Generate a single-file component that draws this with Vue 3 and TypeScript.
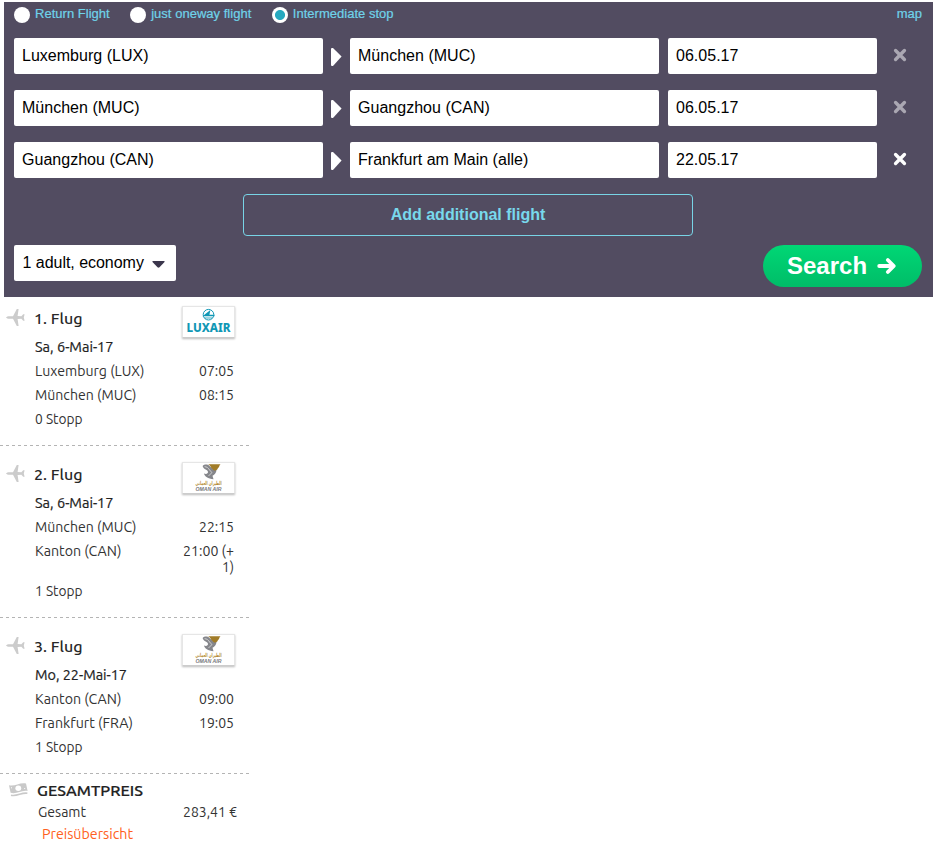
<script setup lang="ts">
import { ref } from 'vue'

interface Leg { from: string; to: string; date: string; removable: boolean }
interface Row { text: string; time: string; width: number; tall?: boolean }
interface Flight { title: string; day: string; dayWidth: number; airline: 'luxair' | 'oman'; rows: Row[]; stops: string }

const modes = ref([
  { label: 'Return Flight', checked: false },
  { label: 'just oneway flight', checked: false },
  { label: 'Intermediate stop', checked: true },
])

const legs = ref<Leg[]>([
  { from: 'Luxemburg (LUX)', to: 'München (MUC)', date: '06.05.17', removable: false },
  { from: 'München (MUC)', to: 'Guangzhou (CAN)', date: '06.05.17', removable: false },
  { from: 'Guangzhou (CAN)', to: 'Frankfurt am Main (alle)', date: '22.05.17', removable: true },
])

const flights: Flight[] = [
  { title: '1. Flug', day: 'Sa, 6-Mai-17', dayWidth: 78.5, airline: 'luxair', stops: '0 Stopp', rows: [
    { text: 'Luxemburg (LUX)', time: '07:05', width: 109.5 },
    { text: 'München (MUC)', time: '08:15', width: 101.5 },
  ] },
  { title: '2. Flug', day: 'Sa, 6-Mai-17', dayWidth: 78.5, airline: 'oman', stops: '1 Stopp', rows: [
    { text: 'München (MUC)', time: '22:15', width: 101.5 },
    { text: 'Kanton (CAN)', time: '21:00 (+', width: 86.5, tall: true },
  ] },
  { title: '3. Flug', day: 'Mo, 22-Mai-17', dayWidth: 92, airline: 'oman', stops: '1 Stopp', rows: [
    { text: 'Kanton (CAN)', time: '09:00', width: 86.5 },
    { text: 'Frankfurt (FRA)', time: '19:05', width: 98 },
  ] },
]
</script>

<template>
  <main class="page">
    <section class="search">
      <div class="modes">
        <label v-for="m in modes" :key="m.label" class="mode">
          <span class="radio" :class="{ on: m.checked }"></span><span class="caption">{{ m.label }}</span>
        </label>
        <a class="map caption">map</a>
      </div>
      <div v-for="(leg, i) in legs" :key="i" class="leg">
        <div class="field">{{ leg.from }}</div>
        <svg class="arrow" viewBox="0 0 11 18"><path d="M0 .5Q0 0 1 0H2L10.6 8.6 2 18H1Q0 18 0 17Z" fill="#fff" /></svg>
        <div class="field">{{ leg.to }}</div>
        <div class="field date">{{ leg.date }}</div>
        <svg class="remove" :class="{ active: leg.removable }" viewBox="0 0 12 12"><path d="M2.2 2.2 9.8 9.8M9.8 2.2 2.2 9.8" /></svg>
      </div>
      <button class="add">Add additional flight</button>
      <div class="bottom">
        <div class="pax"><span>1 adult, economy</span><svg viewBox="0 0 13 7"><path d="M.5 0H12.5V1L7.5 6.3Q6.5 7 5.5 6.3L.5 1Z" fill="#3b364c" /></svg></div>
        <button class="go"><span>Search</span><svg viewBox="0 0 20 18"><path d="M2.2 9H16M10.8 3 16.8 9 10.8 15" /></svg></button>
      </div>
    </section>

    <aside class="trip">
      <section v-for="f in flights" :key="f.title" class="flight">
        <header class="head">
          <svg class="plane" viewBox="0 0 19 17"><path d="M0 8.5C.6 7.6 2 7.3 3.5 7.2H7L10.8 0H12.6L11.6 7 15.4 7.2 17.2 5.3H18.6L17.8 8.5 18.6 11.7H17.2L15.4 9.8 11.6 10 12.6 17H10.8L7 9.8H3.5C2 9.7.6 9.4 0 8.5Z" fill="#ccc" /></svg>
          <svg class="title" viewBox="0 0 52 24"><text x="0" y="18" textLength="48.5" lengthAdjust="spacingAndGlyphs">{{ f.title }}</text></svg>
          <span class="logo">
            <svg v-if="f.airline === 'luxair'" viewBox="0 0 51 30">
              <circle cx="25.5" cy="7.7" r="5.3" fill="#fff" stroke="#1097b5" stroke-width="1" />
              <path d="M19.5 9.3 27.4 3.1 26.4 7.7H31.5V9.3Z" fill="#1097b5" />
              <path d="M21.5 11H29.5" stroke="#1097b5" stroke-width=".8" />
              <text class="lux" x="3.5" y="25" textLength="44" lengthAdjust="spacingAndGlyphs">LUXAIR</text>
            </svg>
            <svg v-else viewBox="0 0 51 30">
              <path d="M19.6 3C21.6 1 25 1 27 3.5 29 5.5 31 6 33.5 6.7 33.5 10 31 12 29.5 12.7L30.5 16.2C25 15.8 21.5 13.5 21 10.5 23.5 11.5 25 10.5 25 9 25 6.5 20.6 7 19.6 3Z" fill="#85868b" />
              <path d="M25 1.2H37.5C35.8 2.6 36.8 4.2 35 5 34.5 7 33 7.5 31 7.5L28.2 4.8C27.4 3 26.4 1.8 25 1.2Z" fill="#a17c28" />
              <path d="M21.6 3.6C26 3.6 26 7.8 29 9.5L25.5 13" fill="none" stroke="#ddd" stroke-width=".8" />
              <text class="arabic" x="12.5" y="22" textLength="26" lengthAdjust="spacingAndGlyphs">الطيران العماني</text>
              <text class="oman" x="12.5" y="27.8" textLength="26" lengthAdjust="spacingAndGlyphs">OMAN AIR</text>
            </svg>
          </span>
        </header>
        <div class="row day"><svg class="line" viewBox="0 0 130 24"><text x="0" y="17" :textLength="f.dayWidth" lengthAdjust="spacingAndGlyphs">{{ f.day }}</text></svg></div>
        <div v-for="r in f.rows" :key="r.text" class="row" :class="{ tall: r.tall }">
          <svg class="line" viewBox="0 0 130 24"><text x="0" y="17" :textLength="r.width" lengthAdjust="spacingAndGlyphs">{{ r.text }}</text></svg>
          <svg v-if="r.tall" class="time" viewBox="0 0 55 40"><text x="4" y="17" textLength="51" lengthAdjust="spacingAndGlyphs">{{ r.time }}</text><text x="43" y="33" textLength="12" lengthAdjust="spacingAndGlyphs">1)</text></svg>
          <svg v-else class="time" viewBox="0 0 55 24"><text x="20" y="17" textLength="35" lengthAdjust="spacingAndGlyphs">{{ r.time }}</text></svg>
        </div>
        <div class="row"><svg class="line" viewBox="0 0 130 24"><text x="0" y="17" textLength="47.5" lengthAdjust="spacingAndGlyphs">{{ f.stops }}</text></svg></div>
      </section>
      <section class="total">
        <div class="total-head">
          <svg class="money" viewBox="0 0 19 14"><path d="M0 2.2C5 4 11 -.8 17 .6L18.6 8C12.5 6.8 7.5 11.6 1.6 9.8Z" fill="#c9c9c9" /><path d="M2 12.2C8 13.8 12.5 9.2 18.4 10.3" fill="none" stroke="#c9c9c9" stroke-width="1.6" /><ellipse cx="9.3" cy="5.2" rx="2.9" ry="2.7" fill="#fff" /><path d="M2 4.9 3 4.7M15.2 5.6 16.2 5.4" stroke="#fff" /></svg>
          <svg class="total-title" viewBox="0 0 110 22"><text x="0" y="17" textLength="106" lengthAdjust="spacingAndGlyphs">GESAMTPREIS</text></svg>
        </div>
        <div class="sum">
          <svg class="label" viewBox="0 0 130 22"><text x="0" y="17" textLength="48" lengthAdjust="spacingAndGlyphs">Gesamt</text></svg>
          <svg class="time" viewBox="0 0 55 22"><text x="0" y="17" textLength="54" lengthAdjust="spacingAndGlyphs">283,41 €</text></svg>
        </div>
        <svg class="link" viewBox="0 0 110 22"><text x="0" y="17" textLength="91" lengthAdjust="spacingAndGlyphs">Preisübersicht</text></svg>
      </section>
    </aside>
  </main>
</template>

<style>
body { margin: 0; background: #fff; }
</style>
<style scoped>
* { box-sizing: border-box; }
svg { display: block; flex: none; overflow: visible; }
button { font-family: inherit; padding: 0; }
.page { width: 933px; height: 848px; padding-top: 2px; overflow: hidden; font-family: "Liberation Sans", Arial, sans-serif; }
.search { margin-left: 4px; height: 295px; padding: 4px 10px 0; background: #524c61; }
.modes { display: flex; height: 18px; margin-bottom: 14px; align-items: center; color: #6fd3ea; font-size: 13px; line-height: 16px; }
.mode { display: flex; align-items: center; height: 18px; gap: 5px; margin-right: 20.5px; }
.caption { height: 18px; letter-spacing: .02px; -webkit-text-stroke: .2px #6fd3ea; }
.radio { width: 16px; height: 16px; border-radius: 50%; background: #fff; }
.radio.on { background: radial-gradient(circle, #27a9c0 4.6px, #fff 5.4px); }
.map { margin-left: auto; margin-right: 1px; }
.leg { display: flex; align-items: center; height: 36px; margin-bottom: 16px; }
.field { width: 309px; height: 36px; padding-left: 8px; line-height: 35px; background: #fff; border-radius: 2px; color: #000; font-size: 16px; letter-spacing: .02px; }
.arrow { width: 11px; height: 18px; margin: 1px 8px 0; }
.date { width: 209px; margin-left: 9px; }
.remove { width: 14px; height: 14px; margin: -2px 0 0 16px; fill: none; stroke: #aaa7b2; stroke-width: 2.9; stroke-linecap: round; }
.remove.active { stroke: #fff; }
.add { display: block; width: 450px; height: 42px; margin: 0 0 9px 229px; background: transparent; border: 1px solid #78d4e6; border-radius: 4px; color: #78d8ec; font-size: 16px; font-weight: bold; }
.bottom { display: flex; justify-content: space-between; align-items: flex-start; padding-right: 1px; }
.pax { width: 162px; height: 36px; padding-left: 8.5px; display: flex; align-items: center; background: #fff; border-radius: 2px; color: #000; font-size: 16px; line-height: 35px; }
.pax span { width: 121px; height: 36px; white-space: nowrap; letter-spacing: -.03px; }
.pax svg { width: 13px; height: 7px; margin: 2px 0 0 8.5px; }
.go { width: 159px; height: 42px; display: flex; align-items: center; padding-left: 24px; border: 0; border-radius: 21px; background: linear-gradient(#00d775, #00bd68); color: #fff; font-size: 24px; font-weight: bold; }
.go span { width: 80px; text-align: left; }
.go svg { width: 20px; height: 18px; margin: -1px 0 0 9.5px; fill: none; stroke: #fff; stroke-width: 3.8; stroke-linecap: round; stroke-linejoin: round; }
.trip { width: 250px; font-family: Ubuntu, "Noto Sans", sans-serif; }
.trip text { font-family: Ubuntu, "Noto Sans", sans-serif; font-size: 14px; fill: #333; }
.flight { padding: 9px 0 15px; background: repeating-linear-gradient(90deg, #b4b4b4 0 3.5px, transparent 3.5px 6px) left bottom / 249px 1px no-repeat; }
.flight + .flight { padding-top: 16px; }
.head { display: flex; height: 29px; padding-left: 6px; }
.plane { width: 19px; height: 17px; margin: 3px 9px 0 0; }
.title { width: 52px; height: 24px; }
.trip .title text { font-size: 15.5px; font-weight: 500; fill: #282828; }
.logo { width: 53px; height: 32px; margin-left: 95.5px; flex: none; background: #fff; border: 1px solid #e6e6e6; border-bottom-color: #ccc; box-shadow: 0 1px 2px #bbb; }
.logo svg { width: 51px; height: 30px; }
.trip .lux { font-family: "Noto Sans", sans-serif; font-size: 13px; font-weight: 800; fill: #1097b5; }
.trip .arabic { font-family: "DejaVu Sans", sans-serif; font-size: 5.5px; font-weight: bold; fill: #b38b35; direction: ltr; }
.trip .oman { font-family: "Liberation Sans", sans-serif; font-size: 4.5px; font-weight: bold; font-style: italic; fill: #77777b; }
.row { display: flex; height: 24px; padding-left: 35px; }
.row.tall { height: 40px; }
.line { width: 130px; height: 24px; }
.trip .day text { fill: #222; stroke: #222; stroke-width: .2px; }
.time { width: 55px; height: 24px; margin-left: 14px; }
.tall .time { height: 40px; }
.total-head { display: flex; height: 21px; margin-top: 5px; padding-left: 9px; }
.money { width: 19px; height: 14px; margin: 4px 8.5px 0 0; }
.total-title { width: 110px; height: 22px; }
.trip .total-title text { font-size: 15.5px; font-weight: 500; fill: #222; stroke: #222; stroke-width: .2px; }
.sum { display: flex; height: 22px; padding-left: 38px; }
.label { width: 130px; height: 22px; }
.sum .time { height: 22px; margin-left: 15px; }
.link { width: 110px; height: 22px; margin-left: 42px; }
.trip .link text { fill: #ff6020; }
</style>
